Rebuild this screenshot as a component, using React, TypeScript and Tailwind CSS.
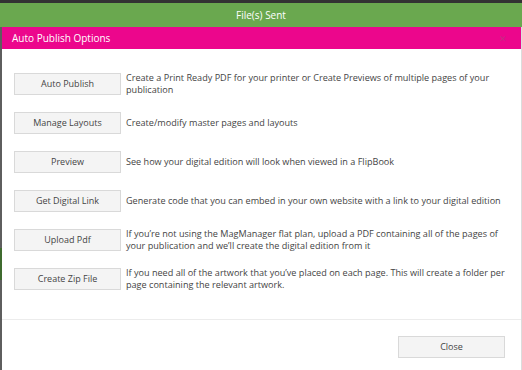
const options = [
  {
    label: "Auto Publish",
    text: "Create a Print Ready PDF for your printer or Create Previews of multiple pages of your publication",
  },
  { label: "Manage Layouts", text: "Create/modify master pages and layouts" },
  { label: "Preview", text: "See how your digital edition will look when viewed in a FlipBook" },
  {
    label: "Get Digital Link",
    text: "Generate code that you can embed in your own website with a link to your digital edition",
  },
  {
    label: "Upload Pdf",
    text: "If you\u2019re not using the MagManager flat plan, upload a PDF containing all of the pages of your publication and we\u2019ll create the digital edition from it",
  },
  {
    label: "Create Zip File",
    text: "If you need all of the artwork that you\u2019ve placed on each page. This will create a folder per page containing the relevant artwork.",
  },
];

const App = () => {
  return (
    <div className="w-[522px] h-[370px] overflow-hidden flex flex-col bg-white font-['Open_Sans',sans-serif]">
      {/* top app bar */}
      <div className="h-[3px] bg-[#333] shrink-0" />
      <div className="h-[24px] shrink-0 bg-[#6aa84f] text-white text-[10px] flex items-center justify-center">
        File(s) Sent
      </div>
      <div className="flex flex-1 min-h-0">
        {/* page behind the dialog */}
        <div className="w-[2px] flex flex-col bg-[#5e5e5e]">
          <div className="h-[221px]" />
          <div className="h-[32px] bg-[#3f6b2f]" />
        </div>
        {/* dialog */}
        <div className="flex-1 flex flex-col border-r border-[#dcdcdc]">
          <div className="h-[22px] shrink-0 bg-[#ec068c] flex items-center justify-between pl-[10px] pr-[14px]">
            <span className="text-white text-[10px]">Auto Publish Options</span>
            <span className="text-[#c82a84] text-[9px] leading-none">✕</span>
          </div>
          <div className="flex flex-col gap-[17px] pt-[24px] pb-[29px] pl-[12px] pr-[14px]">
            {options.map((o) => (
              <div key={o.label} className="flex items-center gap-[5px] h-[22px]">
                <button className="w-[107px] h-[22px] shrink-0 bg-[#f4f4f4] border border-[#d9d9d9] text-[9px] text-[#444]">
                  {o.label}
                </button>
                <p className="text-[9.1px] leading-[12px] text-[#444]">{o.text}</p>
              </div>
            ))}
          </div>
          <div className="border-t border-[#ececec] flex justify-end pt-[16px] pr-[16px]">
            <button className="w-[107px] h-[22px] bg-[#f4f4f4] border border-[#d9d9d9] text-[9px] text-[#444]">
              Close
            </button>
          </div>
        </div>
      </div>
    </div>
  );
};

export default App;
